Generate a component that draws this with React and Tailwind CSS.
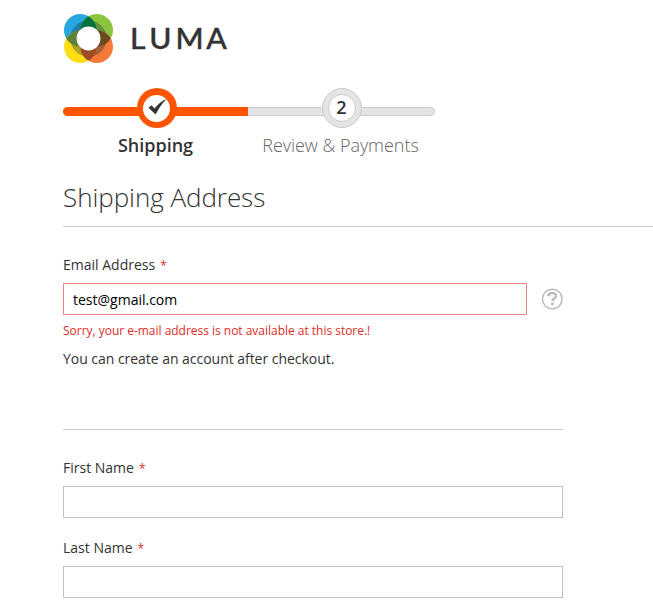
const lenses = [
  { id: 'top', a: [80.2, 30.2], b: [96.8, 30.2], fill: '#00733a' },
  { id: 'right', a: [96.8, 30.2], b: [96.8, 46.8], fill: '#6b4a1e' },
  { id: 'bottom', a: [80.2, 46.8], b: [96.8, 46.8], fill: '#a04a22' },
  { id: 'left', a: [80.2, 30.2], b: [80.2, 46.8], fill: '#5c8238' },
];

function Logo() {
  return (
    <svg className="block" width="172" height="56" viewBox="60 10 172 56" role="img" aria-label="LUMA">
      <circle cx="80.2" cy="30.2" r="16.2" fill="#27a6df" />
      <circle cx="96.8" cy="30.2" r="16.2" fill="#8bc53f" />
      <circle cx="80.2" cy="46.8" r="16.2" fill="#ffdd15" />
      <circle cx="96.8" cy="46.8" r="16.2" fill="#f47a3a" />
      <circle cx="88.5" cy="38.5" r="18.2" fill="#12303a" fillOpacity="0.34" />
      {lenses.map((l) => (
        <g key={l.id}>
          <clipPath id={l.id}>
            <circle cx={l.a[0]} cy={l.a[1]} r="16.2" />
          </clipPath>
          <circle cx={l.b[0]} cy={l.b[1]} r="16.2" fill={l.fill} clipPath={`url(#${l.id})`} />
        </g>
      ))}
      <circle cx="88.5" cy="38.5" r="11.9" fill="#fff" />
      <text transform="translate(130 48.7) scale(1.07 1)" x="0 18 42.5 71.2" y="0" fontSize="28.2" fill="#333" stroke="#333" strokeWidth=".4" className="font-['Lato'] font-medium">LUMA</text>
    </svg>
  );
}

function Progress() {
  return (
    <ol className="mt-[22px] flex w-[372px] text-center text-[18px] leading-[25px]">
      <li className="w-[185px]">
        <div className="relative flex h-10 items-center justify-center">
          <div className="absolute inset-x-0 top-[19px] h-[9px] rounded-l-md bg-[#ff5501]" />
          <div className="relative left-[1px] flex size-10 items-center justify-center rounded-full bg-[#ff5501]">
            <div className="flex size-[27px] items-center justify-center rounded-full bg-white">
              <svg width="20" height="18" viewBox="0 0 20 18">
                <path d="M1.8 8.7 L4.6 6.7 L7.6 9.9 C10.4 6.2 14 2.8 18.4 0.8 C14.4 5 11.2 9.8 8.5 15 Z" fill="#333" stroke="#333" strokeWidth=".7" />
              </svg>
            </div>
          </div>
        </div>
        <span className="mt-[5px] block font-semibold text-[#333]">Shipping</span>
      </li>
      <li className="w-[187px]">
        <div className="relative flex h-10 items-center justify-center">
          <div className="absolute inset-x-0 top-[19px] h-[9px] rounded-r-md border border-l-0 border-[#ccc] bg-[#e4e4e4]" />
          <div className="relative flex size-10 items-center justify-center rounded-full border border-[#ccc] bg-[#e4e4e4]">
            <div className="flex size-7 items-center justify-center rounded-full border border-[#ccc] bg-white pb-0.5 font-semibold text-[#333]">2</div>
          </div>
        </div>
        <span className="-ml-[2px] mt-[5px] block font-light tracking-[-0.04px] whitespace-nowrap text-[#666]">Review &amp; Payments</span>
      </li>
    </ol>
  );
}

function Label({ children }) {
  return (
    <label className="block text-[14px] leading-5">
      {children}
      <span className="ml-[5px] text-[12px] text-[#e02b27]">*</span>
    </label>
  );
}

export default function App() {
  return (
    <main className="h-[606px] overflow-hidden bg-white pt-[10px] pl-[63px] font-['Open_Sans',sans-serif] text-[#333]">
      <div className="-ml-[3px]"><Logo /></div>
      <Progress />
      <h1 className="mt-[21px] h-[48px] border-b border-[#ccc] text-[26px] leading-[36px] font-light tracking-[-0.05px]">Shipping Address</h1>
      <form className="w-[500px]">
        <div className="mt-7"><Label>Email Address</Label></div>
        <div className="mt-[7px] flex items-center gap-[14px]">
          <input type="text" defaultValue="test@gmail.com" className="h-8 w-[464px] shrink-0 border border-[#ed8380] px-[9px] text-[14px] text-black" />
          <svg className="shrink-0" width="22" height="22" viewBox="0 0 22 22" fill="none" stroke="#bbb">
            <circle cx="11.3" cy="11" r="9.8" strokeWidth="1.5" />
            <path d="M7.3 8.2 C7.7 4 15 4.1 15 7.9 C15 10.4 11.5 10.2 11.5 13" strokeWidth="2.5" />
            <path d="M11.5 14.6 V17.2" strokeWidth="2.7" />
          </svg>
        </div>
        <p className="mt-[7px] text-[12px] leading-[17px] tracking-[-0.02px] text-[#e02b27]">Sorry, your e-mail address is not available at this store.!</p>
        <p className="mt-[10px] text-[14px] leading-5 tracking-[-0.035px]">You can create an account after checkout.</p>
        <div className="mt-[60px] border-t border-[#ccc]" />
        <div className="mt-7"><Label>First Name</Label></div>
        <input type="text" className="mt-[7px] block h-8 w-full border border-[#c2c2c2] px-[9px]" />
        <div className="mt-5"><Label>Last Name</Label></div>
        <input type="text" className="mt-[7px] block h-8 w-full border border-[#c2c2c2] px-[9px]" />
      </form>
    </main>
  );
}
